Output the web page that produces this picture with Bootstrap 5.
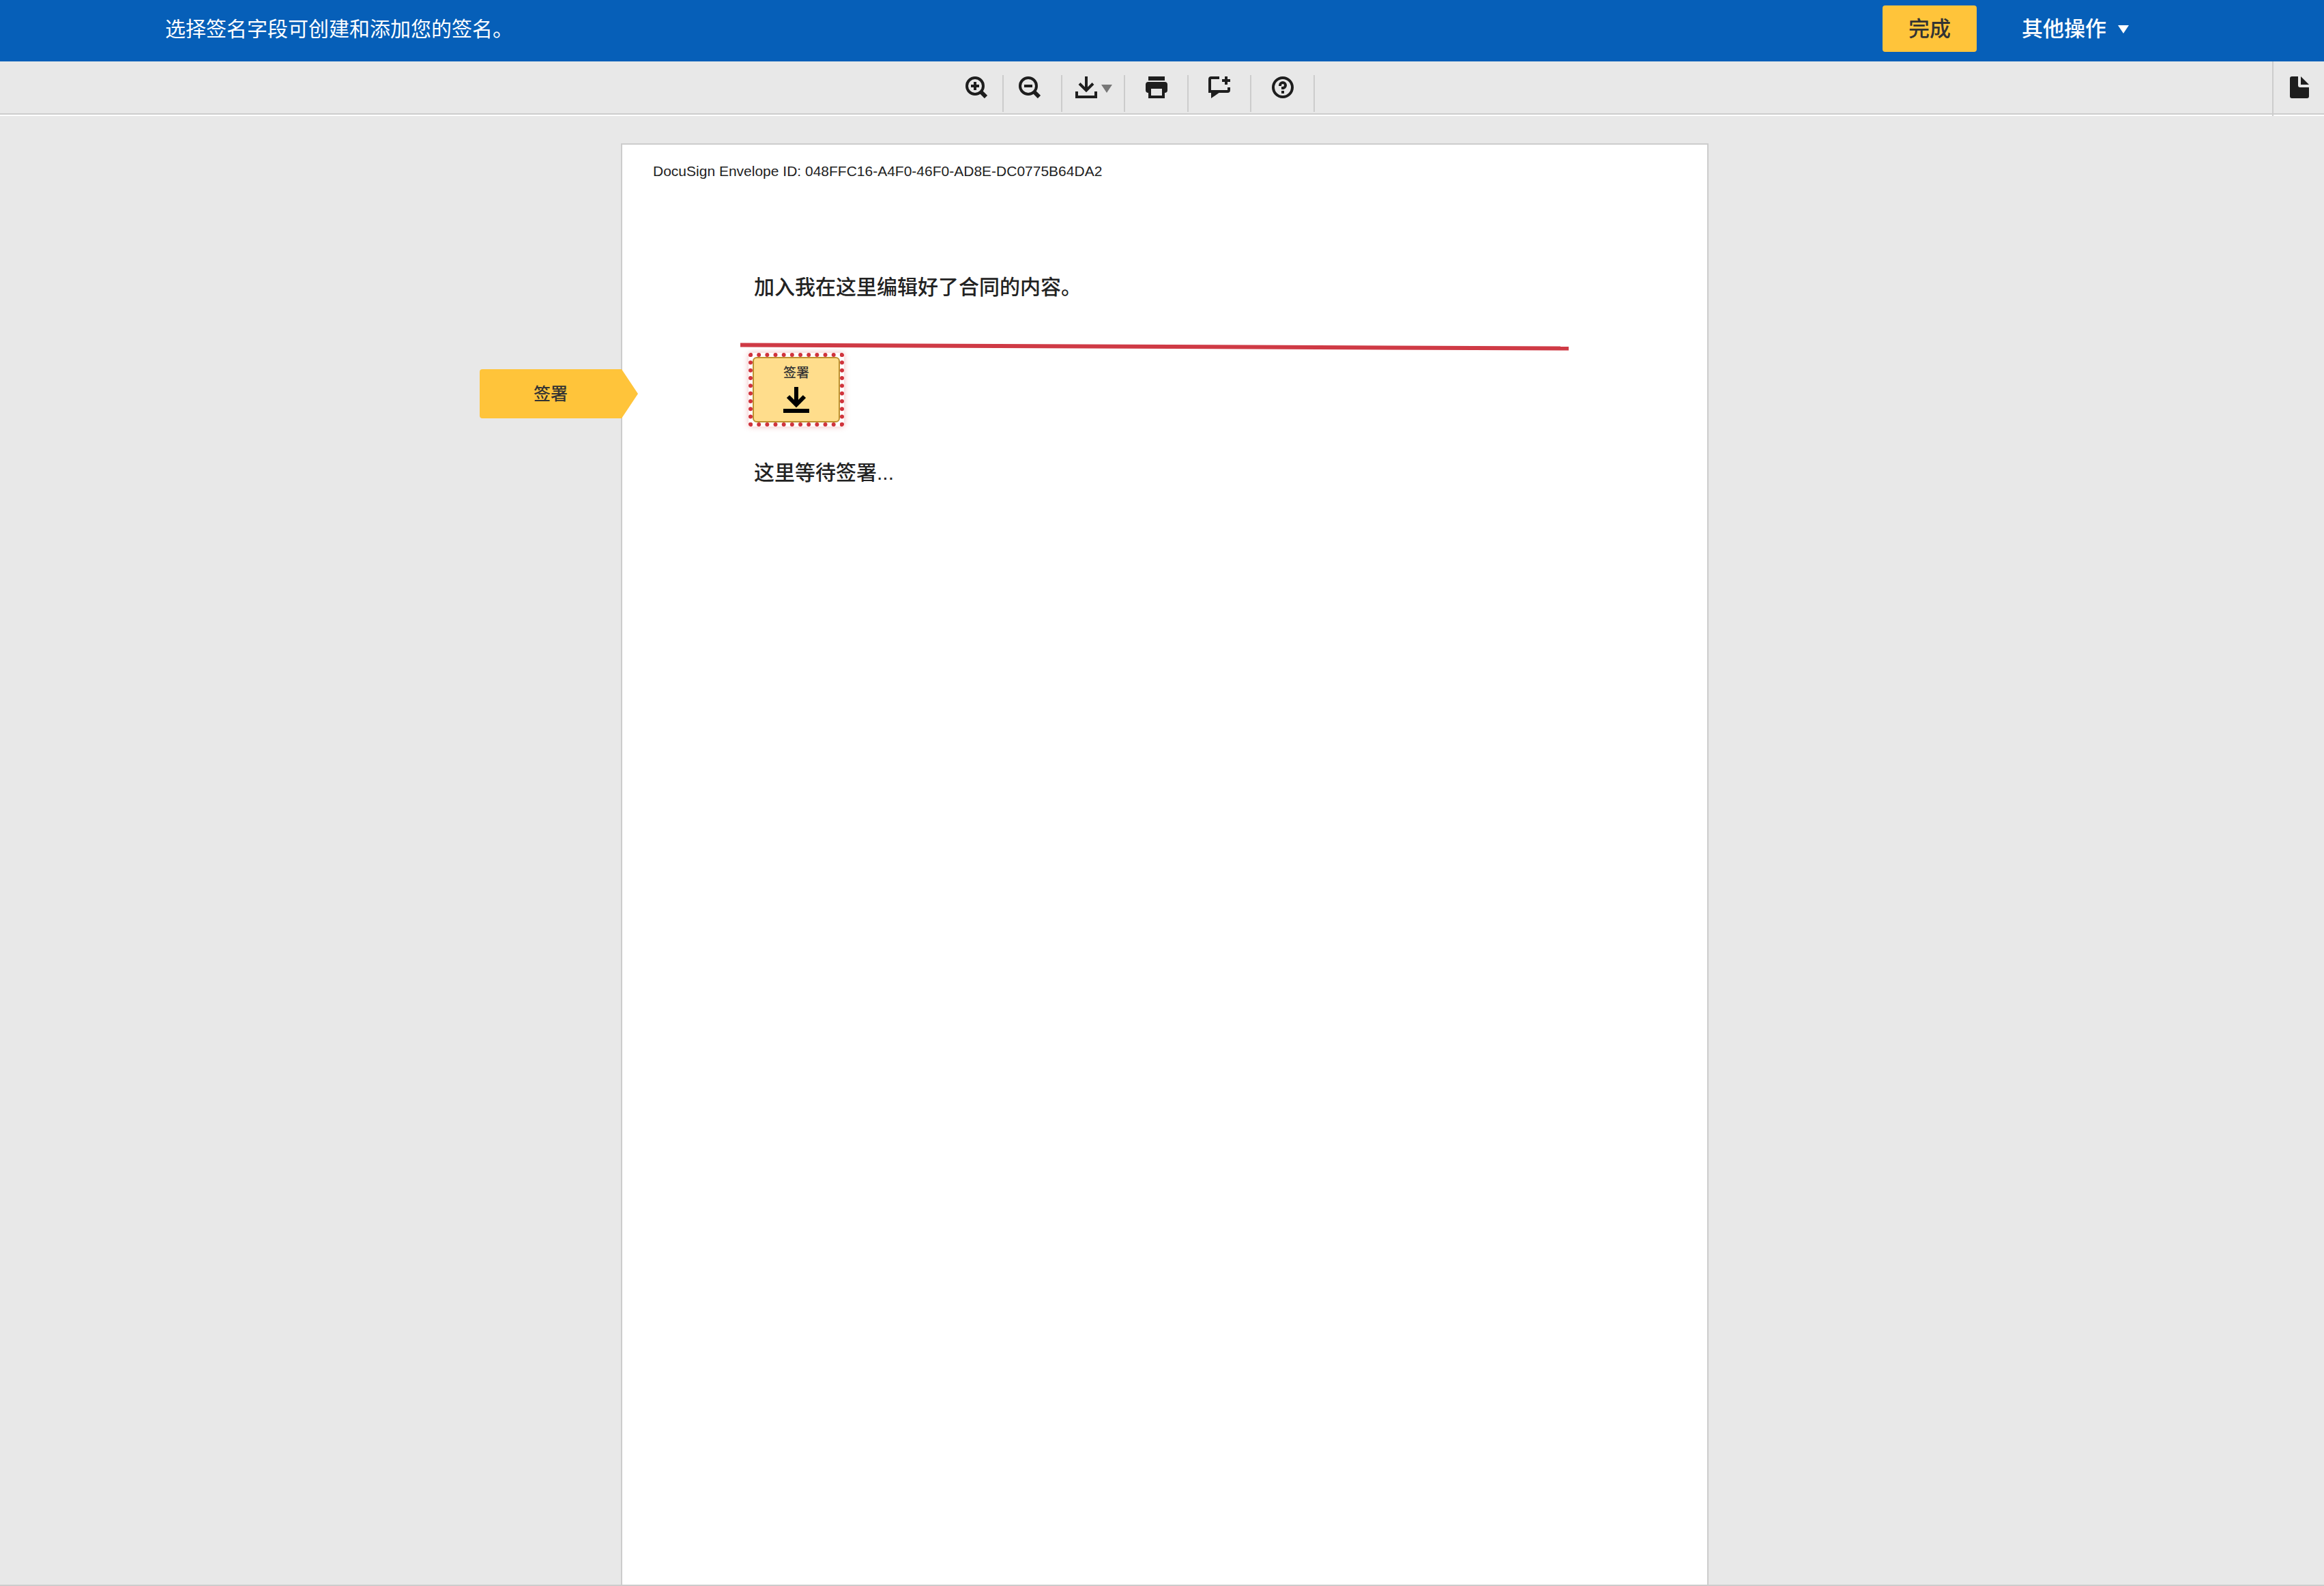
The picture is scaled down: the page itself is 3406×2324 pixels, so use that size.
<!DOCTYPE html>
<html lang="zh-CN">
<head>
<meta charset="utf-8">
<meta name="viewport" content="width=device-width, initial-scale=1">
<title>DocuSign</title>
<link href="https://cdn.jsdelivr.net/npm/bootstrap@5.3.0/dist/css/bootstrap.min.css" rel="stylesheet">
<style>
  body { background: #e8e8e8; color: #1e1e1e; font-family: "Liberation Sans", "Noto Sans CJK SC", sans-serif; }
  svg { display: block; }
  .action-bar { background: #065fb8; height: 90px; padding: 0 286px 6px 242px; }
  .action-text { font-size: 30px; line-height: 44px; color: #fff; padding-top: 2px; }
  .action-set { gap: 66px; }
  .btn-finish, .btn-more { height: 68px; padding: 2px 0 0 0; border: 0; border-radius: 4px; font-size: 31px; line-height: 44px; font-weight: 500; }
  .btn-finish, .btn-finish:hover { width: 138px; background: #ffc43a; color: #333; }
  .btn-more, .btn-more:hover { color: #fff; gap: 17px; }
  .tool-row { height: 80px; border-bottom: 2px solid #fff; }
  .tool-line { border-bottom: 2px solid #ccc; padding-top: 20px; }
  .tool { height: 54px; width: 93px; padding: 2px 0 0 0; border: 0; border-right: 2px solid #ccc; border-radius: 0; background: transparent; color: #1e1e1e; }
  .tool-in { width: 68px; padding-right: 10px; }
  .tool-out { width: 86px; padding-right: 8px; }
  .tool-load { width: 92px; padding-left: 2px; gap: 6px; }
  .tool-note { width: 92px; }
  .pages-toggle { width: 76px; border: 0; border-left: 2px solid #ccc; border-radius: 0; background: transparent; color: #1e1e1e; height: 80px; padding: 22px 22px 0 0; }
  .viewer { padding: 40px 0 0 8px; border-bottom: 2px solid #ccc; }
  .sheet { width: 1594px; max-width: 100%; background: #fff; border: 2px solid #ccc; border-bottom: 0; padding-top: 25px; }
  .envelope { font-size: 21px; line-height: 28px; color: #222; padding-left: 45px; }
  .contract { padding: 134px 0 0 173px; }
  .contract-text { font-size: 30px; line-height: 44px; font-weight: 500; color: #222; padding-left: 20px; }
  .rule { width: 1214px; height: 14px; margin-top: 58px; }
  .field { width: 140px; height: 108px; margin: 2px 0 0 12px; padding: 0; border: 6px dotted #d0333c; border-radius: 4px; background: transparent; box-shadow: 0 0 8px rgba(208,51,60,.35); }
  .field-face { background: #ffdd8c; border: 2px solid #be9130; border-radius: 6px; color: #333; font-size: 19px; line-height: 24px; font-weight: 500; padding-top: 10px; gap: 8px; }
  .after { padding-top: 46px; }
  .flag { left: -209px; top: 329px; width: 232px; height: 72px; padding: 0 24px 0 0; border: 0; background: #ffc43a; color: #333; font-size: 25px; line-height: 36px; font-weight: 500; border-radius: 4px 0 0 4px; clip-path: polygon(0 0, 208px 0, 100% 50%, 208px 100%, 0 100%); }
</style>
</head>
<body>
<div class="d-flex flex-column min-vh-100">
  <header class="action-bar d-flex align-items-center justify-content-between">
    <p class="action-text m-0">选择签名字段可创建和添加您的签名。</p>
    <div class="action-set d-flex align-items-center">
      <button type="button" class="btn btn-finish">完成</button>
      <button type="button" class="btn btn-more d-flex align-items-center">其他操作
        <svg width="16" height="12" viewBox="0 0 16 12" fill="currentColor" aria-hidden="true"><path d="M0 0h16L8 12z"/></svg>
      </button>
    </div>
  </header>

  <div class="tool-row d-flex">
    <div class="tool-line flex-grow-1 d-flex justify-content-center" role="toolbar" aria-label="文档工具">
      <button type="button" class="tool tool-in d-flex justify-content-center" aria-label="放大">
        <svg width="32" height="32" viewBox="0 0 32 32" fill="none" stroke="currentColor" stroke-width="4"><circle cx="14" cy="14" r="12"/><path d="M8 14h12M14 8v12"/><path d="M22 22l8 8" stroke-width="6"/></svg>
      </button>
      <button type="button" class="tool tool-out d-flex justify-content-center" aria-label="缩小">
        <svg width="32" height="32" viewBox="0 0 32 32" fill="none" stroke="currentColor" stroke-width="4"><circle cx="14" cy="14" r="12"/><path d="M8 14h12"/><path d="M22 22l8 8" stroke-width="6"/></svg>
      </button>
      <button type="button" class="tool tool-load d-flex justify-content-center" aria-label="下载">
        <svg width="32" height="32" viewBox="0 0 32 32" fill="none" stroke="currentColor" stroke-width="4"><path d="M16 0v21M6 10.500l10 10 10-10"/><path d="M2 22v8h28v-8"/></svg>
        <svg width="16" height="32" viewBox="0 0 16 32" fill="#777"><path d="M0 12h16L8 24z"/></svg>
      </button>
      <button type="button" class="tool d-flex justify-content-center" aria-label="打印">
        <svg width="32" height="32" viewBox="0 0 32 32" fill="currentColor"><path d="M4 0h24v6H4z"/><path fill-rule="evenodd" d="M4 8h24a4 4 0 0 1 4 4v8a4 4 0 0 1-4 4v8H4v-8a4 4 0 0 1-4-4v-8a4 4 0 0 1 4-4zM8 18v10h16V18z"/></svg>
      </button>
      <button type="button" class="tool tool-note d-flex justify-content-center" aria-label="评论">
        <svg width="32" height="32" viewBox="0 0 32 32" fill="none" stroke="currentColor" stroke-width="4"><path d="M16 2H4q-2 0-2 2v18h26q2 0 2-2v-4M26 0v12M20 6h12"/><path d="M4 22v10l13-9z" fill="currentColor" stroke="none"/></svg>
      </button>
      <button type="button" class="tool d-flex justify-content-center" aria-label="帮助">
        <svg width="32" height="32" viewBox="0 0 32 32" fill="none" stroke="currentColor" stroke-width="4"><circle cx="16" cy="16" r="14"/><path d="M12 14v-1a4 4 0 1 1 4 4v2M16 21v4"/></svg>
      </button>
    </div>
    <div class="tool-line pt-0">
      <button type="button" class="pages-toggle d-flex justify-content-end" aria-label="页面">
        <svg width="28" height="32" viewBox="0 0 28 32" fill="currentColor"><path d="M3 0h9v13q0 3 3 3h13v13q0 3-3 3H3q-3 0-3-3V3q0-3 3-3z"/><path d="M16 0l12 12H16z"/></svg>
      </button>
    </div>
  </div>

  <main class="viewer flex-grow-1 d-flex justify-content-center">
    <article class="sheet position-relative">
      <button type="button" class="flag position-absolute">签署</button>
      <div class="envelope">DocuSign Envelope ID: 048FFC16-A4F0-46F0-AD8E-DC0775B64DA2</div>
      <div class="contract">
        <p class="contract-text m-0">加入我在这里编辑好了合同的内容。</p>
        <svg class="rule" viewBox="0 0 1214 14" preserveAspectRatio="none" aria-hidden="true"><path d="M0 4.500L1214 9.500" stroke="#cf3a45" stroke-width="6"/></svg>
        <button type="button" class="field d-flex">
          <span class="field-face flex-grow-1 align-self-stretch d-flex flex-column align-items-center">签署
            <svg width="38" height="38" viewBox="0 0 38 38" fill="none" stroke="#000" stroke-width="6"><path d="M0 35h38M19 0v26M7 14l12 12 12-12"/></svg>
          </span>
        </button>
        <p class="contract-text after m-0">这里等待签署...</p>
      </div>
    </article>
  </main>
</div>
<script src="https://cdn.jsdelivr.net/npm/bootstrap@5.3.0/dist/js/bootstrap.bundle.min.js"></script>
</body>
</html>
